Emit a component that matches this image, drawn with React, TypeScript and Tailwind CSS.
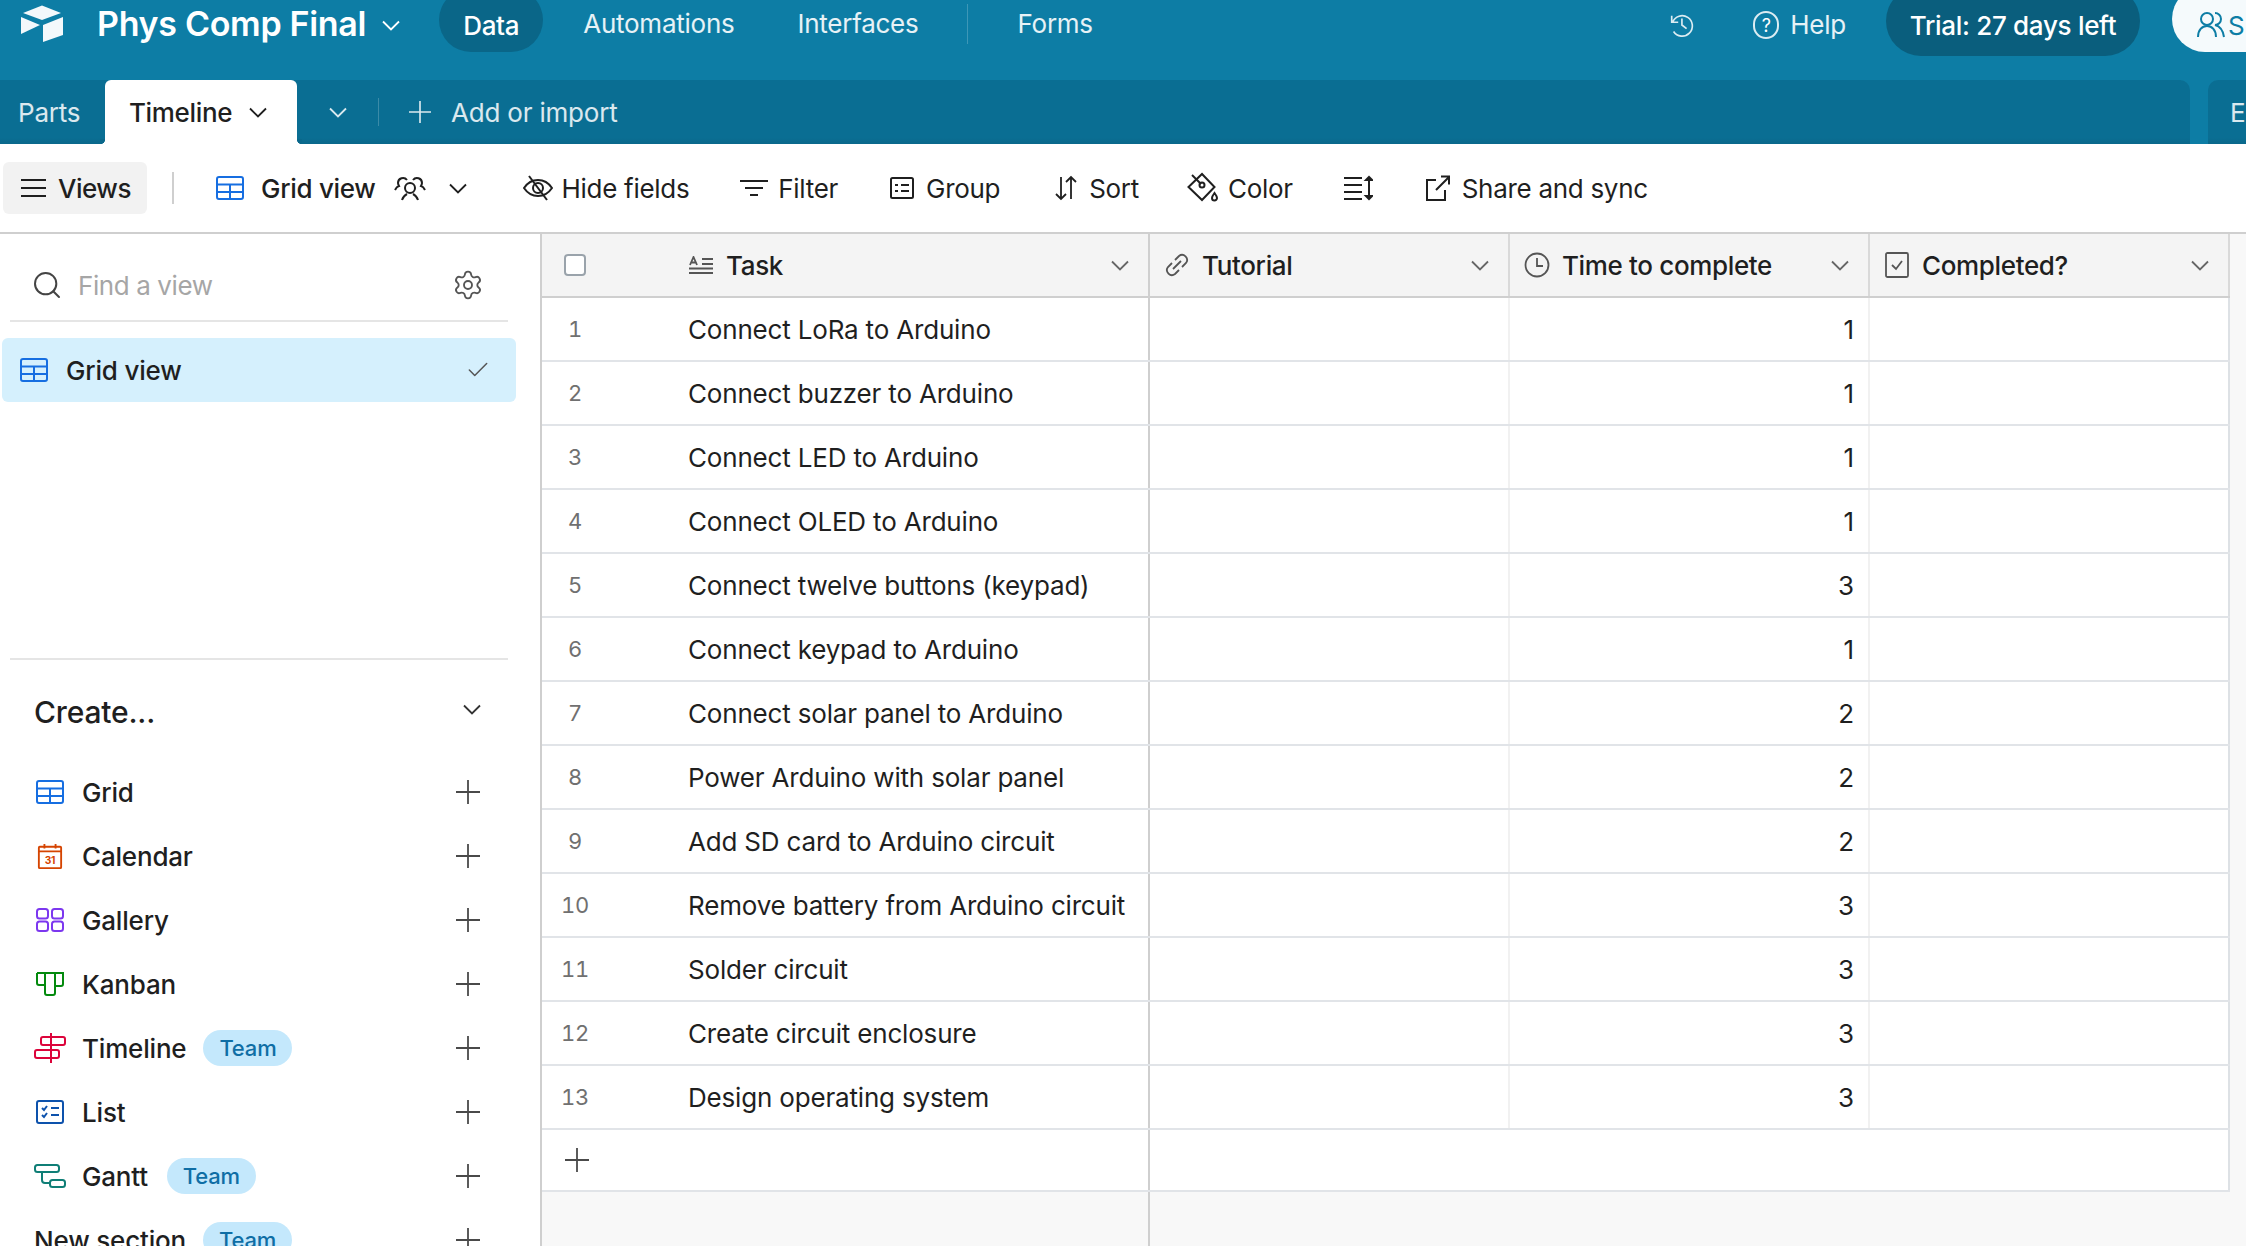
import { Check, Search, Settings } from "lucide-react";

const FONT = "font-['Inter','Noto_Sans',sans-serif]";

const tasks: [string, number][] = [
  ["Connect LoRa to Arduino", 1],
  ["Connect buzzer to Arduino", 1],
  ["Connect LED to Arduino", 1],
  ["Connect OLED to Arduino", 1],
  ["Connect twelve buttons (keypad)", 3],
  ["Connect keypad to Arduino", 1],
  ["Connect solar panel to Arduino", 2],
  ["Power Arduino with solar panel", 2],
  ["Add SD card to Arduino circuit", 2],
  ["Remove battery from Arduino circuit", 3],
  ["Solder circuit", 3],
  ["Create circuit enclosure", 3],
  ["Design operating system", 3],
];

function Chevron({ className }: { className: string }) {
  return (
    <svg viewBox="0 0 18 11" fill="none" stroke="currentColor" strokeWidth="1.8" className={className}>
      <path d="M1 1.5l8 8 8-8" />
    </svg>
  );
}

function Cross({ className }: { className: string }) {
  return (
    <svg viewBox="0 0 24 24" fill="none" stroke="currentColor" strokeWidth="1.8" className={className}>
      <path d="M12 0v24M0 12h24" />
    </svg>
  );
}

function GridIcon({ className }: { className: string }) {
  return (
    <svg viewBox="0 0 28 24" fill="none" stroke="#166ee1" strokeWidth="2" className={className}>
      <rect x="1" y="1" width="26" height="22" rx="2" />
      <path d="M1 8.5h26M1 16h26M14 8.5V23" />
    </svg>
  );
}

function CalendarIcon() {
  return (
    <svg viewBox="0 0 28 28" fill="none" stroke="#d54401" strokeWidth="2" className="h-[26px] w-[26px]">
      <rect x="2" y="4" width="24" height="23" rx="1" />
      <path d="M2 9h24M8 1v5M20 1v5" />
      <text x="14" y="23" fontSize="11" fontWeight="700" fill="#d54401" stroke="none" textAnchor="middle">31</text>
    </svg>
  );
}

function GalleryIcon() {
  return (
    <svg viewBox="0 0 28 24" fill="none" stroke="#7c37ef" strokeWidth="2" className="h-[24px] w-[28px]">
      <rect x="1" y="1" width="11" height="9.5" rx="2.5" />
      <rect x="16" y="1" width="11" height="9.5" rx="2.5" />
      <rect x="1" y="13.5" width="11" height="9.5" rx="2.5" />
      <rect x="16" y="13.5" width="11" height="9.5" rx="2.5" />
    </svg>
  );
}

function KanbanIcon() {
  return (
    <svg viewBox="0 0 28 24" fill="none" stroke="#048a0e" strokeWidth="2" className="h-[24px] w-[28px]">
      <path d="M1 1h26v11a2 2 0 0 1-2 2h-5M1 1v10a2 2 0 0 0 2 2h5M9 1v20a2 2 0 0 0 2 2h6a2 2 0 0 0 2-2V1" />
    </svg>
  );
}

function TimelineIcon() {
  return (
    <svg viewBox="0 0 32 32" fill="none" stroke="#dc043b" strokeWidth="2" className="h-[32px] w-[32px]">
      <path d="M17 1v30" />
      <path d="M17 5h12a2 2 0 0 1 2 2v4a2 2 0 0 1-2 2H17M17 5H9a2 2 0 0 0-2 2v4a2 2 0 0 0 2 2h8" />
      <path d="M17 18H3a2 2 0 0 0-2 2v4a2 2 0 0 0 2 2h14M17 18h6a2 2 0 0 1 2 2v4a2 2 0 0 1-2 2h-6" />
    </svg>
  );
}

function ListIcon() {
  return (
    <svg viewBox="0 0 28 24" fill="none" stroke="#0d52ac" strokeWidth="2" className="h-[24px] w-[28px]">
      <rect x="1" y="1" width="26" height="22" rx="2" />
      <path d="M6 8l2 2 3-4M6 15l2 2 3-4M15 8h8M15 15h8" />
    </svg>
  );
}

function GanttIcon() {
  return (
    <svg viewBox="0 0 32 24" fill="none" stroke="#0f7e76" strokeWidth="2" className="h-[24px] w-[32px]">
      <rect x="1" y="1" width="24" height="7" rx="2.5" />
      <rect x="16" y="16" width="15" height="7" rx="2.5" />
      <path d="M8 8v8a3 3 0 0 0 3 3h5" />
    </svg>
  );
}

function TeamPill({ className = "ml-[17px]" }: { className?: string }) {
  return (
    <span className={`flex h-[36px] w-[89px] items-center justify-center rounded-full bg-[#c4e8fc] text-[22px] font-medium text-[#0f6ea5] ${className}`}>
      Team
    </span>
  );
}

function CreateRow({ icon, label, pill }: { icon: React.ReactNode; label: string; pill?: React.ReactNode }) {
  return (
    <div className="flex h-[64px] shrink-0 items-center pl-[34px] pr-[60px]">
      <span className="flex w-[32px] items-center justify-center">{icon}</span>
      <span className="ml-[16px] text-[26px] font-medium text-[#1f1f1f]">{label}</span>
      {pill}
      <Cross className="ml-auto h-[24px] w-[24px] text-[#4a4a4a]" />
    </div>
  );
}

function TopBar() {
  return (
    <div className="flex h-[80px] items-start overflow-hidden bg-[#0d7da5] tracking-normal text-white">
      <svg viewBox="0 0 44 38" className="ml-[20px] mt-[5px] h-[38px] w-[44px] fill-[#f3f8fb]">
        <path d="M22 0.5l19 7.5-19 7-19-7z" />
        <path d="M1 12l19 8-19 9z" />
        <path d="M23 20l20-8v18l-20 7z" />
      </svg>
      <span className="ml-[33px] mt-[4px] text-[34px] font-semibold leading-[40px] tracking-[-0.3px]">Phys Comp Final</span>
      <Chevron className="ml-[16px] mt-[20px] h-[11px] w-[18px]" />
      <div className="ml-[39px] -mt-[12px] flex h-[64px] w-[104px] items-center justify-center rounded-full bg-[#0a6688] pt-[10px] text-[26px] font-medium tracking-[-0.4px]">
        Data
      </div>
      <span className="ml-[40px] mt-[5px] text-[26px] leading-[38px] tracking-[-0.25px] text-white/90">Automations</span>
      <span className="ml-[63px] mt-[5px] text-[26px] leading-[38px] tracking-[-0.25px] text-white/90">Interfaces</span>
      <div className="ml-[49px] mt-[4px] h-[40px] w-[1px] bg-white/20" />
      <span className="ml-[49px] mt-[5px] text-[26px] leading-[38px] tracking-[-0.25px] text-white/90">Forms</span>
      <svg viewBox="0 0 26 28" fill="none" stroke="currentColor" strokeWidth="1.8" className="ml-auto mt-[12px] h-[26px] w-[26px] text-white/85">
        <path d="M3 4v7h7M4 11a11 11 0 1 1 1 10M14 7v7l5 4" />
      </svg>
      <div className="ml-[59px] mt-[11px] flex h-[28px] w-[26px] items-center justify-center rounded-full border-2 border-white/85 text-[18px]">?</div>
      <span className="ml-[11px] mt-[5px] text-[26px] leading-[40px] tracking-[-0.25px] text-white/90">Help</span>
      <div className="ml-[40px] -mt-[14px] flex h-[70px] w-[254px] items-center justify-center rounded-full bg-[#0a5e7d] pt-[8px] text-[26px] font-medium tracking-[-0.3px]">
        Trial: 27 days left
      </div>
      <div className="ml-[32px] -mt-[14px] flex h-[66px] w-[120px] shrink-0 -mr-[46px] items-center rounded-l-full bg-[#f5fafc] pl-[24px] pt-[12px] text-[26px] text-[#0d7da5]">
        <svg viewBox="0 0 30 28" fill="none" stroke="currentColor" strokeWidth="2" className="h-[28px] w-[30px]">
          <circle cx="11" cy="8" r="6" />
          <path d="M2 26c0-7 4-11 9-11s9 4 9 11M19 2a6 6 0 0 1 0 12c4 1 8 5 9 12" />
        </svg>
        <span className="ml-[2px]">S</span>
      </div>
    </div>
  );
}

function TabBar() {
  return (
    <div className="flex h-[64px] bg-[#0d7da5] tracking-[-0.2px]">
      <div className="flex w-[2190px] items-stretch rounded-tr-[10px] bg-gradient-to-b from-[#0a6e93] from-90% to-[#0a688b] text-[26px]">
        <span className="flex w-[105px] items-center pl-[18px] text-white/85">Parts</span>
        <div className="relative flex w-[192px] items-center rounded-t-[6px] bg-white pl-[24px] font-medium tracking-[-0.35px] text-[#1f1f1f]">
          <span className="absolute -left-[5px] bottom-0 h-[5px] w-[5px] bg-[radial-gradient(circle_at_0_0,#0a688b_5px,#ffffff_5.5px)]" />
          Timeline
          <Chevron className="ml-[17px] h-[11px] w-[18px]" />
          <span className="absolute -right-[5px] bottom-0 h-[5px] w-[5px] bg-[radial-gradient(circle_at_100%_0,#0a688b_5px,#ffffff_5.5px)]" />
        </div>
        <Chevron className="ml-[32px] h-[11px] w-[18px] self-center text-white/85" />
        <div className="ml-[31px] h-[28px] w-[1px] self-center bg-white/20" />
        <Cross className="ml-[30px] h-[22px] w-[22px] self-center text-white/85" />
        <span className="ml-[20px] flex items-center text-white/85">Add or import</span>
      </div>
      <div className="ml-[18px] flex flex-1 items-center overflow-hidden rounded-tl-[10px] bg-gradient-to-b from-[#0a6e93] from-90% to-[#0a688b] pl-[22px] text-[26px] text-white/85">
        E
      </div>
    </div>
  );
}

function ToolButton({ icon, label, className }: { icon: React.ReactNode; label: string; className: string }) {
  return (
    <div className={`flex items-center ${className}`}>
      {icon}
      <span>{label}</span>
    </div>
  );
}

function Toolbar() {
  return (
    <div className="flex h-[90px] shrink-0 items-center border-b-2 border-[#cfcfcf] text-[26px] tracking-[-0.3px] text-[#1f1f1f]">
      <div className="ml-[3px] flex h-[52px] w-[144px] items-center rounded-[6px] bg-[#f2f2f2] pl-[18px] font-medium tracking-[-0.5px]">
        <svg viewBox="0 0 25 20" fill="none" stroke="currentColor" strokeWidth="2" className="h-[20px] w-[25px]">
          <path d="M0 2h25M0 10h25M0 18h25" />
        </svg>
        <span className="ml-[12px]">Views</span>
      </div>
      <div className="ml-[25px] h-[32px] w-[2px] bg-[#cfcfcf]" />
      <GridIcon className="ml-[42px] h-[24px] w-[28px]" />
      <span className="ml-[17px] font-medium">Grid view</span>
      <svg viewBox="0 0 32 26" fill="none" stroke="currentColor" strokeWidth="2" className="ml-[18px] h-[26px] w-[32px]">
        <circle cx="16" cy="13" r="5" />
        <path d="M8 25c1-3 3-5 5-6M24 25c-1-3-3-5-5-6" />
        <path d="M13 5a5 5 0 0 0-9 3c0 1 .5 2 1 3-2 .5-3 2-4 4" />
        <path d="M19 5a5 5 0 0 1 9 3c0 1-.5 2-1 3 2 .5 3 2 4 4" />
      </svg>
      <Chevron className="ml-[23px] h-[11px] w-[18px]" />
      <ToolButton
        className="ml-[56px] gap-[9px]"
        label="Hide fields"
        icon={
          <svg viewBox="0 0 30 26" fill="none" stroke="currentColor" strokeWidth="2" className="h-[26px] w-[30px]">
            <path d="M1 13c4-6 8-8 14-8s10 2 14 8c-4 6-8 8-14 8s-10-2-14-8z" />
            <circle cx="15" cy="13" r="5" />
            <path d="M6 1l18 24" />
          </svg>
        }
      />
      <ToolButton
        className="ml-[51px] gap-[10px]"
        label="Filter"
        icon={
          <svg viewBox="0 0 28 18" fill="none" stroke="currentColor" strokeWidth="2" className="h-[18px] w-[28px]">
            <path d="M0 2h28M5 9h18M10 16h8" />
          </svg>
        }
      />
      <ToolButton
        className="ml-[52px] gap-[12px]"
        label="Group"
        icon={
          <svg viewBox="0 0 24 22" fill="none" stroke="currentColor" strokeWidth="2" className="h-[22px] w-[24px]">
            <rect x="1" y="1" width="22" height="20" rx="1.5" />
            <path d="M5 8h3M11 8h8M5 14h3M11 14h8" />
          </svg>
        }
      />
      <ToolButton
        className="ml-[54px] gap-[11px]"
        label="Sort"
        icon={
          <svg viewBox="0 0 24 26" fill="none" stroke="currentColor" strokeWidth="1.8" className="h-[26px] w-[24px]">
            <path d="M7 2v22M2 19l5 5 5-5M17 24V2M12 7l5-5 5 5" />
          </svg>
        }
      />
      <ToolButton
        className="ml-[47px] gap-[10px]"
        label="Color"
        icon={
          <svg viewBox="0 0 32 32" fill="none" stroke="currentColor" strokeWidth="2" className="h-[32px] w-[32px]">
            <path d="M2.5 15L16 2l12.5 13L16 28z" />
            <path d="M6 3l9 9" />
            <circle cx="16" cy="13" r="2.5" />
            <path d="M28.5 21c1.5 2 2.5 3.5 2.5 5a2.5 2.5 0 0 1-5 0c0-1.5 1-3 2.5-5z" />
          </svg>
        }
      />
      <svg viewBox="0 0 29 26" fill="none" stroke="currentColor" strokeWidth="2" className="ml-[51px] h-[26px] w-[29px]">
        <path d="M0 3h18M0 10h18M0 17h18M0 24h18M25 2v22" />
        <path d="M22 5l3-3 3 3zM22 21l3 3 3-3z" fill="currentColor" />
      </svg>
      <ToolButton
        className="ml-[53px] gap-[12px]"
        label="Share and sync"
        icon={
          <svg viewBox="0 0 24 26" fill="none" stroke="currentColor" strokeWidth="2" className="h-[26px] w-[24px]">
            <path d="M10 5H1v20h18v-10M10 15L23 2M15 1.5h8v8" />
          </svg>
        }
      />
    </div>
  );
}

function Sidebar() {
  return (
    <aside className="flex w-[542px] shrink-0 flex-col overflow-hidden border-r-2 border-[#cfcfcf]">
      <div className="ml-[10px] flex h-[88px] w-[498px] shrink-0 items-center border-b-2 border-[#e5e5e5] pl-[21px] pr-[24px] pt-[16px]">
        <Search className="h-[32px] w-[32px] text-[#444]" strokeWidth={1.5} />
        <span className="ml-[15px] text-[26px] tracking-[-0.4px] text-[#a6a6a6]">Find a view</span>
        <Settings className="ml-auto h-[32px] w-[32px] text-[#555]" strokeWidth={1.4} />
      </div>
      <div className="ml-[2px] mt-[16px] flex h-[64px] w-[514px] shrink-0 items-center rounded-[6px] bg-[#d5f0fd] pl-[18px] pr-[25px]">
        <GridIcon className="h-[24px] w-[28px]" />
        <span className="ml-[18px] text-[26px] font-medium text-[#1f1f1f]">Grid view</span>
        <Check className="ml-auto h-[26px] w-[26px] text-[#555]" strokeWidth={1.4} />
      </div>
      <div className="ml-[10px] mt-[256px] h-[2px] w-[498px] shrink-0 bg-[#e5e5e5]" />
      <div className="flex h-[100px] shrink-0 items-center pl-[34px] pr-[59px] pt-[4px]">
        <span className="text-[30px] font-medium text-[#1f1f1f]">Create...</span>
        <Chevron className="ml-auto mb-[5px] h-[11px] w-[18px] text-[#333]" />
      </div>
      <CreateRow icon={<GridIcon className="h-[24px] w-[28px]" />} label="Grid" />
      <CreateRow icon={<CalendarIcon />} label="Calendar" />
      <CreateRow icon={<GalleryIcon />} label="Gallery" />
      <CreateRow icon={<KanbanIcon />} label="Kanban" />
      <CreateRow icon={<TimelineIcon />} label="Timeline" pill={<TeamPill />} />
      <CreateRow icon={<ListIcon />} label="List" />
      <CreateRow icon={<GanttIcon />} label="Gantt" pill={<TeamPill className="ml-[19px]" />} />
      <div className="flex h-[64px] shrink-0 items-center pl-[34px] pr-[60px]">
        <span className="text-[26px] font-medium text-[#1f1f1f]">New section</span>
        <TeamPill />
        <Cross className="ml-auto h-[24px] w-[24px] text-[#4a4a4a]" />
      </div>
    </aside>
  );
}

function HeaderCell({ icon, label }: { icon: React.ReactNode; label: string }) {
  return (
    <div className="flex w-[360px] shrink-0 items-center border-r-2 border-[#d9d9d9] pl-[14px] pr-[19px]">
      <span className="flex w-[26px] items-center justify-center">{icon}</span>
      <span className="ml-[12px] font-medium tracking-[-0.35px]">{label}</span>
      <Chevron className="ml-auto h-[11px] w-[18px] text-[#666]" />
    </div>
  );
}

function Grid() {
  return (
    <main className="flex flex-1 flex-col overflow-hidden bg-[#f8f8f8] text-[26px] text-[#1f1f1f]">
      <div className="flex h-[64px] w-[1688px] shrink-0 border-b-2 border-[#cfcfcf] bg-[#f4f4f4]">
        <div className="flex w-[608px] shrink-0 items-center border-r-2 border-[#cfcfcf] pl-[22px] pr-[19px]">
          <span className="h-[22px] w-[22px] rounded-[4px] border-2 border-[#9aa3ab] bg-white" />
          <svg viewBox="0 0 24 18" fill="none" stroke="#555" strokeWidth="1.8" className="ml-[103px] h-[18px] w-[24px]">
            <path d="M0 17h24M0 12.5h24M13 3h11M13 8h11M1 9l3.5-8L8 9M2 6.5h5" />
          </svg>
          <span className="ml-[13px] font-medium tracking-[-0.35px]">Task</span>
          <Chevron className="ml-auto h-[11px] w-[18px] text-[#666]" />
        </div>
        <HeaderCell
          label="Tutorial"
          icon={
            <svg viewBox="0 0 26 26" fill="none" stroke="#555" strokeWidth="1.8" className="h-[26px] w-[26px]">
              <path d="M11 8l4-4a5 5 0 0 1 7 7l-4 4M15 18l-4 4a5 5 0 0 1-7-7l4-4M9 17l8-8" />
            </svg>
          }
        />
        <HeaderCell
          label="Time to complete"
          icon={
            <svg viewBox="0 0 26 26" fill="none" stroke="#555" strokeWidth="1.8" className="h-[26px] w-[26px]">
              <circle cx="13" cy="13" r="11.5" />
              <path d="M13 6v8h6" />
            </svg>
          }
        />
        <HeaderCell
          label="Completed?"
          icon={
            <svg viewBox="0 0 24 26" fill="none" stroke="#555" strokeWidth="1.8" className="h-[26px] w-[24px]">
              <rect x="1" y="1" width="22" height="24" rx="1.5" />
              <path d="M7 13l4 4 6-8" />
            </svg>
          }
        />
      </div>
      {tasks.map(([task, time], i) => (
        <div key={task} className="flex h-[64px] w-[1688px] shrink-0 border-b-2 border-[#e1e4e8] bg-white tracking-[-0.18px]">
          <div className="flex w-[608px] shrink-0 items-center border-r-2 border-[#cfcfcf]">
            <span className="w-[66px] text-center text-[22px] tabular-nums text-[#707070]">{i + 1}</span>
            <span className="ml-[80px]">{task}</span>
          </div>
          <div className="w-[360px] shrink-0 border-r-2 border-[#f1f1f1]" />
          <div className="flex w-[360px] shrink-0 items-center justify-end border-r-2 border-[#f1f1f1] pr-[14px]">
            {time}
          </div>
          <div className="w-[360px] shrink-0 border-r-2 border-[#dde1e5]" />
        </div>
      ))}
      <div className="flex h-[62px] w-[1688px] shrink-0 border-b-2 border-[#e1e4e8] bg-white">
        <div className="flex w-[608px] shrink-0 items-center border-r-2 border-[#cfcfcf] pl-[23px]">
          <Cross className="h-[24px] w-[24px] text-[#4a4a4a]" />
        </div>
        <div className="flex-1 border-r-2 border-[#dde1e5]" />
      </div>
      <div className="flex flex-1">
        <div className="w-[608px] shrink-0 border-r-2 border-[#cfcfcf]" />
      </div>
    </main>
  );
}

export default function App() {
  return (
    <div className={`flex h-[1246px] w-[2246px] flex-col overflow-hidden bg-white ${FONT}`}>
      <TopBar />
      <TabBar />
      <Toolbar />
      <div className="flex min-h-0 flex-1 tracking-[-0.18px]">
        <Sidebar />
        <Grid />
      </div>
    </div>
  );
}
